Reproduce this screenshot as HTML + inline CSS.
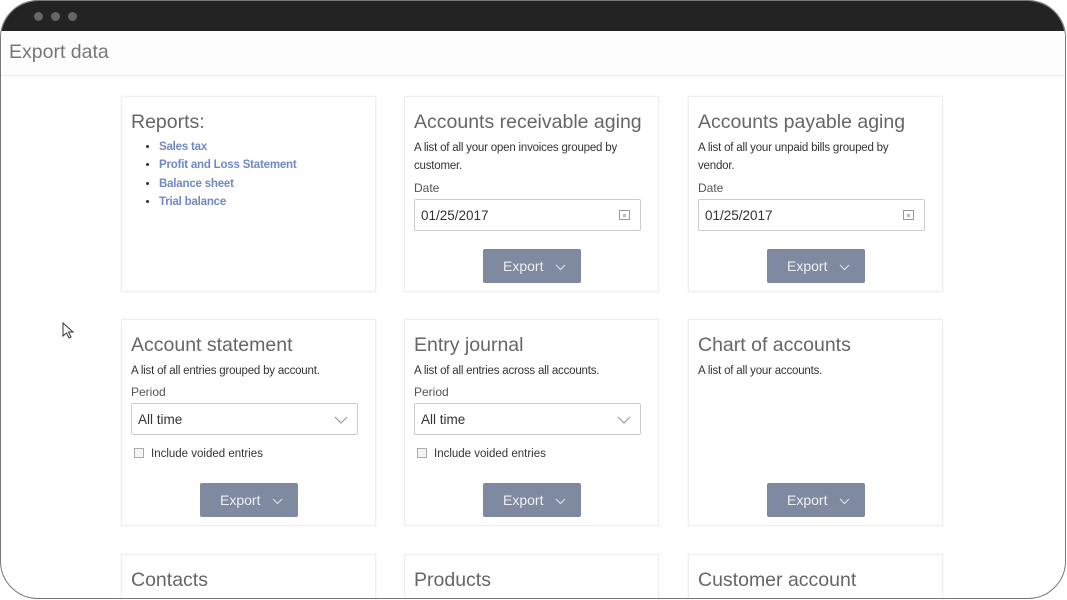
<!DOCTYPE html>
<html><head><style>
*{margin:0;padding:0;box-sizing:border-box}
html,body{width:1067px;height:600px;overflow:hidden}
body{background:#fff;font-family:"Liberation Sans",sans-serif;position:relative}
.frame{position:absolute;left:0;top:0;width:1066px;height:599px;border:1.5px solid #777;border-radius:38px;overflow:hidden;background:#fff}
.bar{position:absolute;left:0;top:0;width:100%;height:30px;background:#232323}
.dot{position:absolute;top:11px;width:9px;height:9px;border-radius:50%;background:#666}
.hdr{position:absolute;left:0;top:30px;width:100%;height:45px;border-bottom:1px solid #eee;background:#fdfdfd}
.hdr span{position:absolute;left:8px;top:10px;font-size:19.5px;color:#777}
.card{position:absolute;width:255px;background:#fff;border:1px solid #eee;box-shadow:0 0 3px rgba(0,0,0,.05)}
.t{position:absolute;left:9px;top:14px;font-size:19.5px;color:#666;white-space:nowrap}
.d{position:absolute;left:9px;top:42px;font-size:11.5px;color:#333;line-height:18px;width:225px;letter-spacing:-.2px}
.l{position:absolute;left:9px;font-size:12px;color:#555}
.in{position:absolute;left:9px;width:227px;height:32px;border:1px solid #ccc;border-radius:2px;font-size:13.5px;color:#333;padding:8px 6px}
.btn{position:absolute;left:78px;width:98px;height:34px;background:#7f8aa0;border-radius:2px;color:#eef0f4;font-size:14px;padding:9px 0 0 20px}
.btn svg,.in svg{position:absolute}
ul{position:absolute;left:37px;top:41px;font-size:11.5px;font-weight:bold;color:#7088c4;line-height:18.3px;letter-spacing:-.2px}
li::marker{color:#333}
.cb{position:absolute;left:12px;width:10px;height:10px;border:1px solid #aaa;background:#f4f4f4}
</style></head><body>
<div class="frame">
<div class="bar"><div class="dot" style="left:33px"></div><div class="dot" style="left:50px"></div><div class="dot" style="left:67px"></div></div>
<div class="hdr"><span>Export data</span></div>

<div class="card" style="left:120px;top:95px;height:196px">
<div class="t">Reports:</div>
<ul><li>Sales tax</li><li>Profit and Loss Statement</li><li>Balance sheet</li><li>Trial balance</li></ul>
</div>

<div class="card" style="left:403px;top:95px;height:196px">
<div class="t">Accounts receivable aging</div>
<div class="d">A list of all your open invoices grouped by customer.</div>
<div class="l" style="top:84px">Date</div>
<div class="in" style="top:102px">01/25/2017<svg style="right:10px;top:10px" width="11" height="10"><rect x=".5" y=".5" width="10" height="9" fill="none" stroke="#999"/><rect x="4" y="4" width="3" height="3" fill="#bbb"/></svg></div>
<div class="btn" style="top:152px">Export<svg style="left:72px;top:15px" width="11" height="7"><path d="M1 1l4.5 4.5L10 1" fill="none" stroke="#dde" stroke-width="1.2"/></svg></div>
</div>

<div class="card" style="left:687px;top:95px;height:196px">
<div class="t">Accounts payable aging</div>
<div class="d" style="width:215px">A list of all your unpaid bills grouped by vendor.</div>
<div class="l" style="top:84px">Date</div>
<div class="in" style="top:102px">01/25/2017<svg style="right:10px;top:10px" width="11" height="10"><rect x=".5" y=".5" width="10" height="9" fill="none" stroke="#999"/><rect x="4" y="4" width="3" height="3" fill="#bbb"/></svg></div>
<div class="btn" style="top:152px">Export<svg style="left:72px;top:15px" width="11" height="7"><path d="M1 1l4.5 4.5L10 1" fill="none" stroke="#dde" stroke-width="1.2"/></svg></div>
</div>

<div class="card" style="left:120px;top:318px;height:207px">
<div class="t">Account statement</div>
<div class="d">A list of all entries grouped by account.</div>
<div class="l" style="top:65px">Period</div>
<div class="in" style="top:83px">All time<svg style="right:9px;top:12px" width="14" height="8"><path d="M1 1l6 6 6-6" fill="none" stroke="#999" stroke-width="1.2"/></svg></div>
<div class="cb" style="top:128px"></div><div class="l" style="left:29px;top:128px;color:#333;font-size:11.5px">Include voided entries</div>
<div class="btn" style="top:163px">Export<svg style="left:72px;top:15px" width="11" height="7"><path d="M1 1l4.5 4.5L10 1" fill="none" stroke="#dde" stroke-width="1.2"/></svg></div>
</div>

<div class="card" style="left:403px;top:318px;height:207px">
<div class="t">Entry journal</div>
<div class="d">A list of all entries across all accounts.</div>
<div class="l" style="top:65px">Period</div>
<div class="in" style="top:83px">All time<svg style="right:9px;top:12px" width="14" height="8"><path d="M1 1l6 6 6-6" fill="none" stroke="#999" stroke-width="1.2"/></svg></div>
<div class="cb" style="top:128px"></div><div class="l" style="left:29px;top:128px;color:#333;font-size:11.5px">Include voided entries</div>
<div class="btn" style="top:163px">Export<svg style="left:72px;top:15px" width="11" height="7"><path d="M1 1l4.5 4.5L10 1" fill="none" stroke="#dde" stroke-width="1.2"/></svg></div>
</div>

<div class="card" style="left:687px;top:318px;height:207px">
<div class="t">Chart of accounts</div>
<div class="d">A list of all your accounts.</div>
<div class="btn" style="top:163px">Export<svg style="left:72px;top:15px" width="11" height="7"><path d="M1 1l4.5 4.5L10 1" fill="none" stroke="#dde" stroke-width="1.2"/></svg></div>
</div>

<div class="card" style="left:120px;top:553px;height:46px"><div class="t">Contacts</div></div>
<div class="card" style="left:403px;top:553px;height:46px"><div class="t">Products</div></div>
<div class="card" style="left:687px;top:553px;height:46px"><div class="t">Customer account</div></div>

<svg style="position:absolute;left:61px;top:321px" width="12" height="18"><path d="M1 1v13l3.5-3 2.5 5 2-1-2.5-5H11z" fill="#fff" stroke="#333" stroke-width="1"/></svg>
</div>
</body></html>
